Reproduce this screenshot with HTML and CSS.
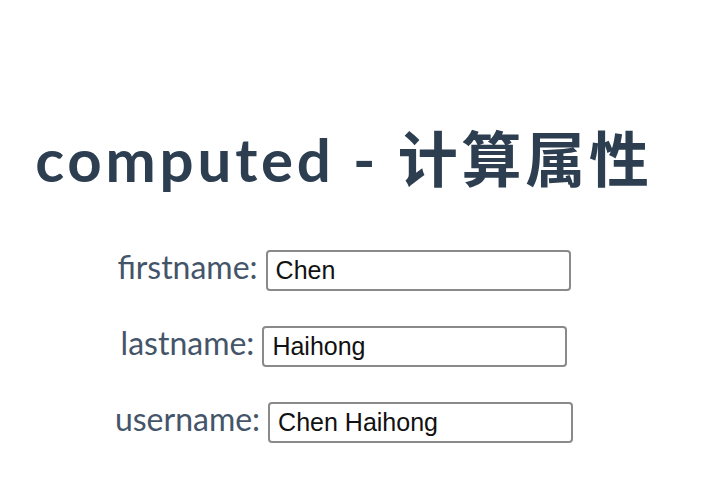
FILE: index.html
```html
<!DOCTYPE html>
<html>
<head>
<meta charset="utf-8">
<link rel="stylesheet" href="styles.css">
</head>
<body>
<main class="app">
  <h1 class="title">computed - 计算属性</h1>
  <div class="row">
    <label class="label">firstname:</label>
    <input class="field" type="text" value="Chen">
  </div>
  <div class="row">
    <label class="label">lastname:</label>
    <input class="field" type="text" value="Haihong">
  </div>
  <div class="row">
    <label class="label">username:</label>
    <input class="field" type="text" value="Chen Haihong">
  </div>
</main>
</body>
</html>
```
FILE: styles.css
```css
html, body {
  margin: 0;
  padding: 0;
  background: #ffffff;
}
.app {
  width: 688px;
  font-family: Lato, "Noto Sans CJK SC", sans-serif;
  color: #2c3e50;
  text-align: center;
  padding-top: 124px;
}
.title {
  margin: 0 0 56px;
  font-size: 60px;
  line-height: 70px;
  font-weight: 700;
  letter-spacing: 3.8px;
  white-space: nowrap;
}
.row {
  display: flex;
  justify-content: center;
  align-items: flex-start;
  gap: 8px;
  margin-bottom: 35px;
}
.label {
  font-size: 32px;
  line-height: 33px;
  font-weight: 400;
  color: #44556a;
}
.field {
  box-sizing: border-box;
  width: 305px;
  height: 41px;
  border: 2px solid #8a8a8a;
  border-radius: 4px;
  padding: 0 8px;
  font-family: "Liberation Sans", Arial, sans-serif;
  font-size: 25px;
  color: #111;
  background: #fff;
  margin: 0;
}
```
